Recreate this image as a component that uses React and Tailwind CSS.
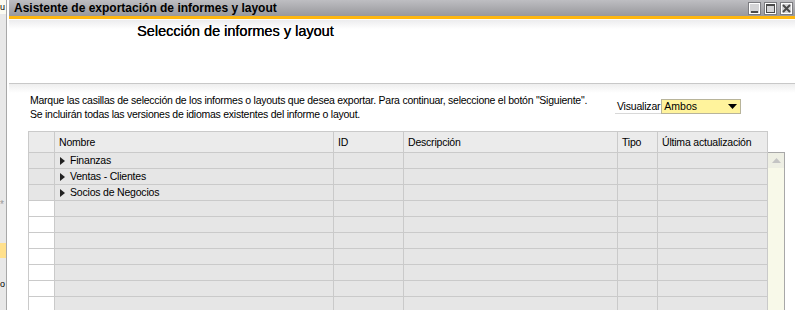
import React from "react";

const columns = [
  { label: "", width: "w-[26px]" },
  { label: "Nombre", width: "w-[279px]" },
  { label: "ID", width: "w-[70px]" },
  { label: "Descripción", width: "w-[214px]" },
  { label: "Tipo", width: "w-[40px]" },
  { label: "Última actualización", width: "w-[110px]" },
];

const groups = ["Finanzas", "Ventas - Clientes", "Socios de Negocios"];

const WinButton = ({ children }) => (
  <div className="w-[13px] h-[13px] border border-[#7c7c80] bg-[#d4d4d6] shadow-[inset_1px_1px_0_#ffffff,inset_-1px_-1px_0_#ffffff] flex items-center justify-center">
    <svg width="11" height="11" viewBox="0 0 11 11">
      {children}
    </svg>
  </div>
);

const App = () => {
  const rows = [...groups, ...Array(9).fill(null)];

  return (
    <div className="w-[795px] h-[310px] overflow-hidden flex bg-white text-black font-['Liberation_Sans',Arial,sans-serif]">
      {/* edge of the window behind */}
      <div className="w-[6px] shrink-0 bg-[#e8e8e8] flex flex-col overflow-hidden">
        <div className="h-[14px] shrink-0 bg-[#fbfbf2] text-[9px] leading-[14px]">u</div>
        <div className="h-[184px] shrink-0" />
        <div className="h-[14px] shrink-0 text-[10px] leading-[14px] text-[#9a9a9a]">*</div>
        <div className="h-[31px] shrink-0" />
        <div className="h-[15px] shrink-0 bg-[#ffe08c]" />
        <div className="h-[19px] shrink-0" />
        <div className="h-[14px] shrink-0 text-[9px] leading-[14px]">o</div>
      </div>
      <div className="w-px shrink-0 bg-[#a8a8a8]" />

      <div className="flex-1 flex flex-col pl-[2px]">
        {/* title bar */}
        <div className="h-[16px] shrink-0 flex items-center justify-between bg-gradient-to-b from-[#bebec2] to-[#98989c] pl-[5px] pr-[2px]">
          <span className="text-[12px] font-bold leading-[16px]">
            Asistente de exportación de informes y layout
          </span>
          <div className="flex gap-[3px]">
            <WinButton>
              <rect x="2" y="8" width="7" height="2" fill="#4a4a4a" />
            </WinButton>
            <WinButton>
              <rect x="1.5" y="1.5" width="8" height="8" fill="none" stroke="#4a4a4a" strokeWidth="1" />
              <rect x="1" y="1" width="9" height="2" fill="#4a4a4a" />
            </WinButton>
            <WinButton>
              <path d="M2 2 L9 9 M9 2 L2 9" stroke="#4a4a4a" strokeWidth="2" />
            </WinButton>
          </div>
        </div>
        <div className="h-[3px] shrink-0 bg-[#ffb70f]" />
        <div className="h-px shrink-0 bg-white" />

        {/* heading */}
        <div className="h-[63px] shrink-0 bg-[linear-gradient(#ececee,#ffffff_9px)] pl-[128px] pt-[3px]">
          <h1 className="text-[14.5px] leading-[17px] font-normal [text-shadow:0.2px_0_0_#000]">
            Selección de informes y layout
          </h1>
        </div>
        <div className="h-px shrink-0 bg-[#c8c8c8]" />

        {/* body */}
        <div className="flex-1 bg-[linear-gradient(#eeeeee,#ffffff_9px)] pl-[19px] pt-[9px]">
          <div className="flex items-start">
            <div className="pl-[2px] text-[10.5px] leading-[14px] tracking-[-0.25px] w-[587px] whitespace-nowrap">
              <p>Marque las casillas de selección de los informes o layouts que desea exportar. Para continuar, seleccione el botón "Siguiente".</p>
              <p>Se incluirán todas las versiones de idiomas existentes del informe o layout.</p>
            </div>
            <div className="flex items-end mt-[6px]">
              <span className="text-[10.5px] leading-[13px] tracking-[-0.2px] border-b border-[#d8d8d8] pl-[2px] pr-[1px] whitespace-nowrap">
                Visualizar
              </span>
              <div className="w-[80px] h-[15px] border border-[#b8b49a] bg-[#fff39c] flex items-center justify-between pl-[2px] pr-[3px]">
                <span className="text-[10.5px] leading-[13px]">Ambos</span>
                <svg width="9" height="6" viewBox="0 0 9 6">
                  <path d="M0 0 H9 L4.5 5 Z" fill="#000" />
                </svg>
              </div>
            </div>
          </div>

          {/* grid */}
          <div className="flex mt-[10px]">
            <div className="flex flex-col border-t border-l border-[#cacaca]">
              <div className="flex h-[21px]">
                {columns.map((c, i) => (
                  <div
                    key={i}
                    className={`${c.width} shrink-0 border-r border-b border-[#cacaca] bg-[#ebebeb] text-[10.5px] tracking-[-0.2px] leading-[20px] pl-[4px] whitespace-nowrap`}
                  >
                    {c.label}
                  </div>
                ))}
              </div>
              {rows.map((name, r) => (
                <div key={r} className="flex h-[16px]">
                  {columns.map((c, i) => (
                    <div
                      key={i}
                      className={`${c.width} shrink-0 border-r border-b border-[#cacaca] ${
                        i === 0 && !name ? "bg-white" : "bg-[#e6e6e6]"
                      } text-[10.5px] tracking-[-0.2px] leading-[15px] flex items-center`}
                    >
                      {i === 1 && name && (
                        <>
                          <svg width="5" height="8" viewBox="0 0 5 8" className="ml-[5px] mr-[5px]">
                            <path d="M0 0 L5 4 L0 8 Z" fill="#222" />
                          </svg>
                          <span>{name}</span>
                        </>
                      )}
                    </div>
                  ))}
                </div>
              ))}
            </div>
            <div className="mt-[21px] w-[17px] border-t border-r border-[#a8a8a8] bg-[#f8f9e9] flex flex-col">
              <div className="h-[15px] bg-[#eeefe4] flex items-center justify-center">
                <svg width="9" height="5" viewBox="0 0 9 5">
                  <path d="M0 5 L4.5 0 L9 5 Z" fill="#c4c4c4" />
                </svg>
              </div>
            </div>
          </div>
        </div>
      </div>
    </div>
  );
};

export default App;
